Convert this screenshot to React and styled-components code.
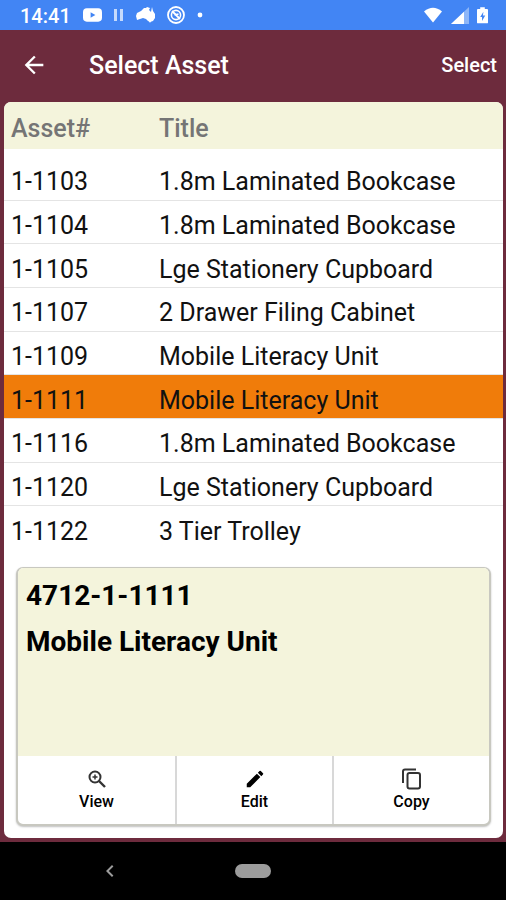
import React, { useState } from 'react';
import styled, { createGlobalStyle } from 'styled-components';
import { MdArrowBack, MdChevronLeft, MdEdit } from 'react-icons/md';

const AssetData = [
  { no: '1-1103', title: '1.8m Laminated Bookcase' },
  { no: '1-1104', title: '1.8m Laminated Bookcase' },
  { no: '1-1105', title: 'Lge Stationery Cupboard' },
  { no: '1-1107', title: '2 Drawer Filing Cabinet' },
  { no: '1-1109', title: 'Mobile Literacy Unit' },
  { no: '1-1111', title: 'Mobile Literacy Unit' },
  { no: '1-1116', title: '1.8m Laminated Bookcase' },
  { no: '1-1120', title: 'Lge Stationery Cupboard' },
  { no: '1-1122', title: '3 Tier Trolley' },
];

function ViewIcon() {
  return (
    <svg width="22" height="22" viewBox="0 0 22 22" fill="none" stroke="#333">
      <circle cx="9" cy="9" r="5.5" strokeWidth="2" />
      <path d="M13 13l6 6" strokeWidth="2.4" />
      <path d="M9 6.5v5M6.500 9h5" strokeWidth="1.5" />
    </svg>
  );
}

function CopyIcon() {
  return (
    <svg
      width="22"
      height="22"
      viewBox="0 0 22 22"
      fill="none"
      stroke="#333"
      strokeWidth="2"
    >
      <path d="M2 15V3.500q0-2 2-2h11" />
      <rect x="6.5" y="5" width="12.5" height="15.5" rx="2" />
    </svg>
  );
}

const ActionData = [
  { label: 'View', icon: <ViewIcon /> },
  { label: 'Edit', icon: <MdEdit size={22} /> },
  { label: 'Copy', icon: <CopyIcon /> },
];

function StatusBar() {
  return (
    <StatusView>
      <ClockSpan>14:41</ClockSpan>
      <NoticeView>
        <svg width="19" height="14" viewBox="0 0 20 14">
          <rect width="20" height="14" rx="4" fill="#fff" />
          <path d="M8 4l5 3-5 3z" fill="#4285f4" />
        </svg>
        <svg width="10" height="12" viewBox="0 0 10 12" fill="#c5dafc">
          <rect width="3" height="12" />
          <rect x="6" width="3" height="12" />
        </svg>
        <svg width="19" height="18" viewBox="0 0 19 18" fill="#fff">
          <path d="M0 10l1-3 4-2 3-3 2 0 1-1 3 1-1 2 2 2 1-5 1 4 2 3 0 4-2 3-3 1-2-1-2-2-3-1-3 1-3 1z" />
          <path d="M13 15h2l-1 2z" />
        </svg>
        <svg width="18" height="18" viewBox="0 0 18 18" fill="none" stroke="#fff">
          <circle cx="9" cy="9" r="8" strokeWidth="1.8" />
          <circle cx="9" cy="9" r="4.6" strokeWidth="1.6" />
          <path d="M5 5l8 8M7.500 9l4-1" strokeWidth="1.8" />
        </svg>
        <svg width="6" height="6" viewBox="0 0 6 6">
          <circle cx="3" cy="3" r="2.4" fill="#fff" />
        </svg>
      </NoticeView>
      <SignalView>
        <svg width="20" height="16" viewBox="0 0 20 16" fill="#fff">
          <path d="M1 4.500Q10-3 19 4.500L10 15.500z" />
        </svg>
        <svg width="18" height="17" viewBox="0 0 18 17" fill="#fff">
          <path d="M0 17L18 0v17z" opacity=".4" />
          <path d="M0 17L13 4.700V17z" />
        </svg>
        <svg width="11" height="17" viewBox="0 0 12 18">
          <path
            d="M3.500 2V0h5v2H11q1 0 1 1v13.500q0 1-1 1H1q-1 0-1-1V3q0-1 1-1z"
            fill="#fff"
          />
          <path d="M7 5L3.500 10.500h2V15L9 9H6.500z" fill="#4285f4" />
        </svg>
      </SignalView>
    </StatusView>
  );
}

function AssetTable({ selected, onSelect }) {
  const rows = AssetData.map((asset, index) => (
    <AssetRow
      key={asset.no}
      $selected={index === selected}
      onClick={() => onSelect(index)}
    >
      <td>{asset.no}</td>
      <td>{asset.title}</td>
    </AssetRow>
  ));

  return (
    <Table>
      <thead>
        <tr>
          <HeadCell scope="col">Asset#</HeadCell>
          <HeadCell scope="col">Title</HeadCell>
        </tr>
      </thead>
      <tbody>{rows}</tbody>
    </Table>
  );
}

function AssetCard({ asset }) {
  return (
    <CardView>
      <CardBody>
        <p>4712-{asset.no}</p>
        <p>{asset.title}</p>
      </CardBody>
      <ActionView>
        {ActionData.map((action) => (
          <ActionButton key={action.label} type="button">
            {action.icon}
            {action.label}
          </ActionButton>
        ))}
      </ActionView>
    </CardView>
  );
}

function App() {
  const [selected, setSelected] = useState(5);

  return (
    <Container>
      <GlobalStyle />
      <StatusBar />
      <AppBar>
        <BackButton type="button" aria-label="Back">
          <MdArrowBack size={28} />
        </BackButton>
        <h1>Select Asset</h1>
        <SelectButton type="button">Select</SelectButton>
      </AppBar>
      <Panel>
        <AssetTable selected={selected} onSelect={setSelected} />
        <AssetCard asset={AssetData[selected]} />
      </Panel>
      <NavBar>
        <NavBackButton type="button" aria-label="Back">
          <MdChevronLeft size={24} />
        </NavBackButton>
        <HomeButton type="button" aria-label="Home" />
      </NavBar>
    </Container>
  );
}

export default App;

const GlobalStyle = createGlobalStyle`
  * {
    box-sizing: border-box;
  }

  body {
    margin: 0;
    font-family: Roboto, sans-serif;
  }

  button {
    padding: 0;
    border: 0;
    background: none;
    color: inherit;
    font: inherit;
    cursor: pointer;
  }
`;

const Container = styled.div`
  display: flex;
  flex-direction: column;
  min-height: 100vh;
  background: #6d2b3d;
`;

const StatusView = styled.div`
  display: flex;
  align-items: center;
  height: 30px;
  padding: 0 18px 0 20px;
  background: #4285f4;
  color: #ffffff;
`;

const ClockSpan = styled.span`
  padding-top: 2px;
  font-size: 20px;
  font-weight: 500;
`;

const NoticeView = styled.div`
  display: flex;
  align-items: center;
  gap: 12px;
  margin-left: 12px;
`;

const SignalView = styled.div`
  display: flex;
  align-items: center;
  gap: 8px;
  margin-left: auto;
`;

const AppBar = styled.header`
  display: flex;
  align-items: center;
  height: 72px;
  padding: 0 9px 2px 20px;
  color: #ffffff;

  h1 {
    margin: 0 0 0 41px;
    font-size: 25px;
    font-weight: 500;
  }
`;

const BackButton = styled.button`
  display: flex;
`;

const SelectButton = styled.button`
  && {
    margin-left: auto;
    font-size: 20px;
    font-weight: 500;
  }
`;

const Panel = styled.main`
  display: flex;
  flex: 1;
  flex-direction: column;
  margin: 0 3px 4px 4px;
  border-radius: 7px;
  background: #ffffff;
  overflow: hidden;
`;

const Table = styled.table`
  width: 100%;
  height: 447px;
  border-collapse: separate;
  border-spacing: 0;
  table-layout: fixed;
  font-size: 25px;
  text-align: left;

  th,
  td {
    padding: 0 7px;
  }

  th:first-child {
    width: 148px;
  }
`;

const HeadCell = styled.th`
  && {
    height: 55px;
    padding-top: 6px;
  }

  border-bottom: 8px solid #ffffff;
  background: #f4f4dc;
  color: #757575;
  font-size: 25px;
  font-weight: 500;
`;

const AssetRow = styled.tr`
  background: ${(props) => (props.$selected ? '#f07c0a' : 'transparent')};
  color: #111111;
  cursor: pointer;

  && td {
    padding-top: 8px;
    border-bottom: 1px solid #e4e4e4;
    line-height: 32px;
  }

  &&:last-child td {
    border-bottom: 0;
  }
`;

const CardView = styled.section`
  display: flex;
  flex: 1;
  flex-direction: column;
  margin: 18px 12px 12px;
  border: 2px solid #c8c8c0;
  border-top-width: 1px;
  border-radius: 7px;
  background: #ffffff;
  box-shadow: 0 1px 2px rgba(0, 0, 0, 0.25);
  overflow: hidden;
`;

const CardBody = styled.div`
  flex: 1;
  padding: 5px 8px;
  background: #f4f4dc;

  p {
    margin: 0;
    font-size: 28px;
    font-weight: 700;
    line-height: 46px;
  }
`;

const ActionView = styled.div`
  display: grid;
  grid-template-columns: repeat(3, 1fr);
  height: 68px;
`;

const ActionButton = styled.button`
  && {
    display: flex;
    flex-direction: column;
    align-items: center;
    justify-content: center;
    gap: 2px;
    padding-bottom: 2px;
    font-size: 16px;
    font-weight: 500;
  }

  && + & {
    border-left: 2px solid #d8d8d8;
  }
`;

const NavBar = styled.nav`
  display: grid;
  grid-template-columns: 1fr 36px 1fr;
  align-items: center;
  height: 58px;
  background: #000000;
  color: #9c9c9c;
`;

const NavBackButton = styled.button`
  && {
    display: flex;
    justify-self: center;
    padding-right: 16px;
  }
`;

const HomeButton = styled.button`
  && {
    height: 14px;
    border-radius: 7px;
    background: #9c9c9c;
  }
`;
